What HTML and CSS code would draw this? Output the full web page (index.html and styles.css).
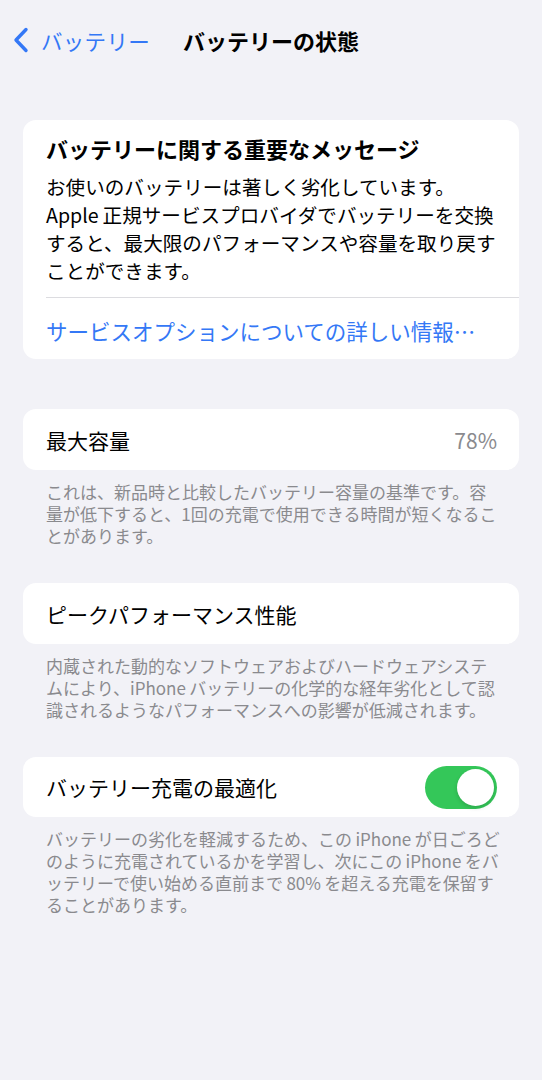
FILE: index.html
```html
<!DOCTYPE html>
<html lang="ja">
<head>
    <meta charset="UTF-8">
    <title>バッテリーの状態</title>
    <link rel="stylesheet" href="styles.css">
</head>
<body>
<header class="nav">
    <a class="back" href="#">
        <svg class="chevron" width="16" height="26" viewBox="0 0 16 26">
            <path d="M13 2.5 L3 13 L13 23.5" fill="none" stroke="#3478f6" stroke-width="3.4" stroke-linecap="round" stroke-linejoin="round"/>
        </svg>
        <span>バッテリー</span>
    </a>
    <h1 class="title">バッテリーの状態</h1>
</header>

<main class="content">
    <section class="card message">
        <h2 class="message-title">バッテリーに関する重要なメッセージ</h2>
        <p class="message-body">お使いのバッテリーは著しく劣化しています。Apple&thinsp;正規サービスプロバイダでバッテリーを交換すると、最大限のパフォーマンスや容量を取り戻すことができます。</p>
        <div class="divider"></div>
        <a class="link" href="#">サービスオプションについての詳しい情報…</a>
    </section>

    <section class="group">
        <div class="card row">
            <span class="label">最大容量</span>
            <span class="value">78%</span>
        </div>
        <p class="footer">これは、新品時と比較したバッテリー容量の基準です。容量が低下すると、1回の充電で使用できる時間が短くなることがあります。</p>
    </section>

    <section class="group">
        <div class="card row">
            <span class="label">ピークパフォーマンス性能</span>
        </div>
        <p class="footer">内蔵された動的なソフトウェアおよびハードウェアシステムにより、iPhone&thinsp;バッテリーの化学的な経年劣化として認識されるようなパフォーマンスへの影響が低減されます。</p>
    </section>

    <section class="group">
        <div class="card row switch-row">
            <span class="label">バッテリー充電の最適化</span>
            <span class="toggle"><span class="knob"></span></span>
        </div>
        <p class="footer">バッテリーの劣化を軽減するため、この&thinsp;iPhone&thinsp;が日ごろどのように充電されているかを学習し、次にこの&thinsp;iPhone&thinsp;をバッテリーで使い始める直前まで&thinsp;80%&thinsp;を超える充電を保留することがあります。</p>
    </section>
</main>
</body>
</html>
```

FILE: styles.css
```css
* {
    padding: 0;
    margin: 0;
    box-sizing: border-box;
}
body {
    font-family: "Noto Sans CJK JP", "Noto Sans", sans-serif;
    background-color: #f2f2f7;
    color: #000;
    min-height: 1080px;
}
a {
    text-decoration: none;
    color: #3478f6;
}

/* navigation bar */
.nav {
    height: 80px;
    display: flex;
    align-items: center;
    padding-left: 13px;
}
.back {
    display: flex;
    align-items: center;
    font-size: 21.5px;
    letter-spacing: 0.3px;
}
.chevron {
    margin-right: 12px;
}
.title {
    margin-left: 33px;
    font-size: 22px;
    font-weight: 700;
}

.content {
    padding: 40px 23px 0;
}
.card {
    background-color: white;
    border-radius: 13px;
}

/* message card */
.message {
    padding-left: 23px;
}
.message-title {
    font-size: 22px;
    font-weight: 700;
    line-height: 30px;
    padding-top: 13px;
    padding-right: 23px;
}
.message-body {
    font-size: 19.6px;
    line-height: 28px;
    margin-top: 10px;
    padding-bottom: 12px;
    padding-right: 23px;
}
.divider {
    height: 1px;
    background-color: #dcdce0;
}
.link {
    display: flex;
    align-items: center;
    height: 61px;
    font-size: 21.5px;
    padding-top: 3px;
}

/* grouped rows */
.group {
    margin-top: 50px;
}
.group + .group {
    margin-top: 36px;
}
.row {
    height: 61px;
    display: flex;
    align-items: center;
    justify-content: space-between;
    padding: 0 22px 0 23px;
}
.switch-row {
    height: 60px;
}
.label {
    font-size: 21px;
}
.value {
    font-size: 21px;
    color: #8a8a8e;
}
.footer {
    font-size: 17px;
    line-height: 22px;
    color: #8a8a8e;
    padding: 11px 16px 0 23px;
}

/* switch */
.toggle {
    width: 72px;
    height: 43px;
    border-radius: 22px;
    background-color: #34c759;
    display: flex;
    align-items: center;
    justify-content: flex-end;
    padding-right: 3px;
}
.knob {
    width: 37px;
    height: 37px;
    border-radius: 50%;
    background-color: white;
    box-shadow: 0 2px 4px rgba(0, 0, 0, 0.15);
}
```
